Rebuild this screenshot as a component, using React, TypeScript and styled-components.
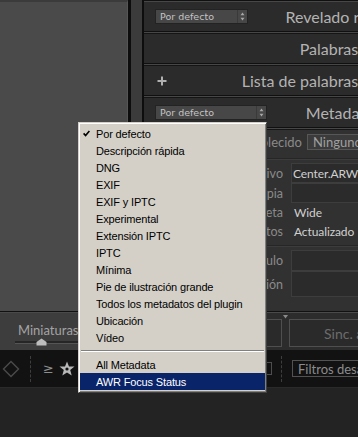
import React from "react";
import styled, { createGlobalStyle } from "styled-components";

const GlobalStyle = createGlobalStyle`
  html, body { margin: 0; padding: 0; background: #232323; overflow: hidden; }
  * { box-sizing: border-box; }
`;

const Screen = styled.div`
  position: relative;
  width: 358px;
  height: 437px;
  overflow: hidden;
  display: flex;
  flex-direction: column;
  background: #232323;
  font-family: Lato, "Open Sans", sans-serif;
`;

const Workspace = styled.div`
  display: flex;
  height: 311px;
  flex: none;
`;

const LeftPanel = styled.div`
  width: 128px;
  flex: none;
  background: #4a4a4a;
  border-top: 2px solid #3b3b3b;
  border-right: 1px solid #565656;
`;

const Gutter = styled.div`
  width: 16px;
  flex: none;
  background: #3b3b3b;
  border-left: 3px solid #0d0d0d;
  border-right: 2px solid #0d0d0d;
`;

const RightPanel = styled.div`
  width: 260px;
  flex: none;
  display: flex;
  flex-direction: column;
  background: #2e2e2e;
`;

const Rule = styled.div<{ $h?: number }>`
  flex: none;
  height: ${(p) => p.$h ?? 3}px;
  background: linear-gradient(#101010 0 1px, #474747 1px 2px, #151515 2px);
`;

const Header = styled.div<{ $pr?: number }>`
  height: 29px;
  flex: none;
  display: flex;
  align-items: center;
  padding: 0 ${(p) => p.$pr ?? 6}px 0 11px;
  background: #2b2b2b;
`;

const HeaderTitle = styled.span`
  margin-left: auto;
  font-size: 16px;
  color: #b3b3b3;
  white-space: nowrap;
`;

const Select = styled.div<{ $w: number }>`
  width: ${(p) => p.$w}px;
  height: 15px;
  display: flex;
  background: #474747;
  border: 1px solid #232323;
  color: #c4c4c4;
  font: 9.5px "DejaVu Sans", sans-serif;
`;

const SelectLabel = styled.span`
  flex: 1;
  display: flex;
  align-items: center;
  padding-left: 4px;
`;

const Spinner = styled.span`
  width: 10px;
  display: flex;
  align-items: center;
  justify-content: center;
  border-left: 1px solid #3a3a3a;
`;

const MetaBody = styled.div`
  flex: 1;
  display: flex;
  flex-direction: column;
  background: #313131;
`;

const PresetRow = styled.div`
  height: 24px;
  display: flex;
  align-items: center;
  gap: 5px;
  font-size: 13px;
`;

const PresetLabel = styled.span`
  width: 158px;
  flex: none;
  text-align: right;
  color: #8a8a8a;
  white-space: nowrap;
`;

const PresetSelect = styled.div`
  width: 100px;
  height: 16px;
  flex: none;
  display: flex;
  align-items: center;
  padding-left: 5px;
  background: #3b3b3b;
  border: 1px solid #575757;
  color: #a0a0a0;
  white-space: nowrap;
`;

const ThinRule = styled.div`
  height: 2px;
  flex: none;
  margin: 4px 0 3px;
  background: linear-gradient(#262626 0 1px, #3c3c3c 1px);
`;

const FieldGrid = styled.div`
  display: grid;
  grid-template-columns: 139px 1fr;
  column-gap: 8px;
  font-size: 12px;
`;

const FieldLabel = styled.span<{ $h: number }>`
  height: ${(p) => p.$h}px;
  display: flex;
  align-items: center;
  justify-content: flex-end;
  color: #8a8a8a;
  font-size: 12.5px;
  white-space: nowrap;
`;

const FieldValue = styled.span<{ $h: number; $boxed?: boolean }>`
  height: ${(p) => p.$h}px;
  display: flex;
  align-items: ${(p) => (p.$boxed ? "flex-start" : "center")};
  padding: ${(p) => (p.$boxed ? "2px 0 0 1px" : "0 0 0 2px")};
  color: #d0d0d0;
  white-space: nowrap;
  letter-spacing: -0.1px;
  background: ${(p) => (p.$boxed ? "#2b2b2b" : "transparent")};
  border: 1px solid ${(p) => (p.$boxed ? "#3d3d3d" : "transparent")};
`;

const BottomBand = styled.div`
  height: 39px;
  flex: none;
  display: flex;
  border-top: 1px solid #111;
`;

const ThumbBand = styled.div`
  width: 128px;
  flex: none;
  display: flex;
  flex-direction: column;
  align-items: flex-start;
  padding: 9px 0 0 15px;
  background: #3d3d3d;
  border-top: 1px solid #4a4a4a;
`;

const ThumbLabel = styled.span`
  margin-left: 3px;
  font-size: 13px;
  color: #a4a4a4;
  line-height: 16px;
`;

const SliderTrack = styled.div`
  margin-top: 3px;
  width: 100px;
  height: 3px;
  display: flex;
  align-items: center;
  background: #262626;
  border-bottom: 1px solid #555;
`;

const SliderThumb = styled.svg`
  margin-left: 21px;
  flex: none;
`;

const SyncBand = styled.div`
  flex: 1;
  display: flex;
  align-items: flex-start;
  padding: 6px 0 0 22px;
  background: #2c2c2c;
  border-top: 1px solid #4a4a4a;
`;

const PanelButton = styled.div<{ $w: number }>`
  width: ${(p) => p.$w}px;
  height: 28px;
  flex: none;
  display: flex;
  align-items: center;
  padding-left: 34px;
  background: #2a2a2a;
  border: 1px solid #4f4f4f;
  color: #6c6c6c;
  font-size: 14px;
  white-space: nowrap;
`;

const Divider = styled.div`
  width: 7px;
  flex: none;
  display: flex;
  justify-content: center;
  margin-top: -4px;
`;

const Toolbar = styled.div`
  height: 38px;
  flex: none;
  display: flex;
  align-items: center;
  background: #121212;
  border-bottom: 1px solid #2a2a2a;
`;

const ToolGroup = styled.div<{ $w?: number; $pad?: number }>`
  ${(p) => (p.$w ? `width: ${p.$w}px; flex: none;` : "flex: 1;")}
  height: 100%;
  display: flex;
  align-items: center;
  padding-left: ${(p) => p.$pad ?? 0}px;
`;

const DashedLine = styled.div<{ $ml: number }>`
  margin-left: ${(p) => p.$ml}px;
  width: 1px;
  height: 26px;
  flex: none;
  border-left: 1px dashed #3e3e3e;
`;

const Glyph = styled.span<{ $ml: number }>`
  margin-left: ${(p) => p.$ml}px;
  color: #8e8e8e;
  font: 13px "DejaVu Sans", sans-serif;
`;

const IconSlot = styled.svg<{ $ml: number }>`
  margin-left: ${(p) => p.$ml}px;
  flex: none;
`;

const TinyBox = styled.div<{ $ml: number }>`
  margin-left: ${(p) => p.$ml}px;
  width: 6px;
  height: 13px;
  flex: none;
  border: 1px solid #4e4e4e;
`;

const FilterBox = styled.div<{ $ml: number }>`
  margin-left: ${(p) => p.$ml}px;
  width: 140px;
  height: 17px;
  flex: none;
  display: flex;
  align-items: center;
  padding-left: 5px;
  border: 1px solid #525252;
  color: #8c8c8c;
  font-size: 13px;
  white-space: nowrap;
`;

const Footer = styled.div`
  flex: 1;
  background: #232323;
`;

/* ---------- context menu ---------- */

const Menu = styled.div`
  position: absolute;
  left: 78px;
  top: 122px;
  width: 189px;
  padding: 2px 1px;
  background: #d4d0c8;
  border: 1px solid;
  border-color: #d4d0c8 #404040 #404040 #d4d0c8;
  box-shadow: inset 1px 1px 0 #ffffff, inset -1px -1px 0 #808080;
  font-family: "Liberation Sans", Arial, sans-serif;
  font-size: 11px;
  letter-spacing: -0.15px;
`;

const MenuItem = styled.div<{ $active?: boolean }>`
  height: 17px;
  display: flex;
  align-items: center;
  color: ${(p) => (p.$active ? "#ffffff" : "#000000")};
  background: ${(p) => (p.$active ? "#0a246a" : "transparent")};
  white-space: nowrap;
`;

const CheckCell = styled.span`
  width: 16px;
  flex: none;
  display: flex;
  align-items: center;
  padding-left: 3px;
`;

const MenuSeparator = styled.div`
  height: 10px;
  margin: 0 1px;
  display: flex;
  flex-direction: column;
  justify-content: center;
  &::before {
    content: "";
    height: 1px;
    background: #808080;
  }
  &::after {
    content: "";
    height: 1px;
    background: #ffffff;
  }
`;

const SpinnerIcon = () => (
  <svg width="5" height="9" viewBox="0 0 5 9">
    <path d="M2.5 0.5 L4.5 3.2 L0.5 3.2 Z" fill="#a8a8a8" />
    <path d="M2.5 8.5 L4.5 5.8 L0.5 5.8 Z" fill="#a8a8a8" />
  </svg>
);

const PresetMenuItems = [
  "Por defecto",
  "Descripción rápida",
  "DNG",
  "EXIF",
  "EXIF y IPTC",
  "Experimental",
  "Extensión IPTC",
  "IPTC",
  "Mínima",
  "Pie de ilustración grande",
  "Todos los metadatos del plugin",
  "Ubicación",
  "Vídeo",
];

export default function App() {
  return (
    <>
      <GlobalStyle />
      <Screen>
        <Workspace>
          <LeftPanel />
          <Gutter />
          <RightPanel>
            <Rule $h={2} />
            <Header>
              <Select $w={93}>
                <SelectLabel>Por defecto</SelectLabel>
                <Spinner>
                  <SpinnerIcon />
                </Spinner>
              </Select>
              <HeaderTitle>Revelado rápido</HeaderTitle>
            </Header>
            <Rule />
            <Header>
              <HeaderTitle>Palabras clave</HeaderTitle>
            </Header>
            <Rule />
            <Header>
              <svg width="10" height="10" viewBox="0 0 10 10" style={{ marginLeft: 2 }}>
                <path d="M5 0.5 V9.5 M0.5 5 H9.5" stroke="#b0b0b0" strokeWidth="2" />
              </svg>
              <HeaderTitle>Lista de palabras clave</HeaderTitle>
            </Header>
            <Rule />
            <Header $pr={23}>
              <Select $w={112}>
                <SelectLabel>Por defecto</SelectLabel>
                <Spinner>
                  <SpinnerIcon />
                </Spinner>
              </Select>
              <HeaderTitle>Metadatos</HeaderTitle>
            </Header>
            <Rule />
            <MetaBody>
              <PresetRow>
                <PresetLabel>Preestablecido</PresetLabel>
                <PresetSelect>Ninguno</PresetSelect>
              </PresetRow>
              <ThinRule />
              <FieldGrid>
                <FieldLabel $h={20}>Nombre de archivo</FieldLabel>
                <FieldValue $h={20} $boxed>Center.ARW</FieldValue>
                <FieldLabel $h={20}>Nombre de copia</FieldLabel>
                <FieldValue $h={20} $boxed />
                <FieldLabel $h={19}>Carpeta</FieldLabel>
                <FieldValue $h={19}>Wide</FieldValue>
                <FieldLabel $h={19}>Estado de metadatos</FieldLabel>
                <FieldValue $h={19}>Actualizado</FieldValue>
              </FieldGrid>
              <ThinRule />
              <FieldGrid>
                <FieldLabel $h={21}>Título</FieldLabel>
                <FieldValue $h={21} $boxed />
                <FieldLabel $h={26}>Pie de ilustración</FieldLabel>
                <FieldValue $h={26} $boxed />
              </FieldGrid>
            </MetaBody>
          </RightPanel>
        </Workspace>

        <BottomBand>
          <ThumbBand>
            <ThumbLabel>Miniaturas</ThumbLabel>
            <SliderTrack>
              <SliderThumb width="11" height="8" viewBox="0 0 11 8">
                <path d="M5.5 0.5 L10.5 4 L10.5 7.5 L0.5 7.5 L0.5 4 Z" fill="#bdbdbd" />
              </SliderThumb>
            </SliderTrack>
          </ThumbBand>
          <SyncBand>
            <PanelButton $w={132}>Sincronizar...</PanelButton>
            <Divider>
              <svg width="5" height="4" viewBox="0 0 5 4">
                <path d="M0 0 H5 L2.5 3.5 Z" fill="#8a8a8a" />
              </svg>
            </Divider>
            <PanelButton $w={120}>Sinc. ajustes</PanelButton>
          </SyncBand>
        </BottomBand>

        <Toolbar>
          <ToolGroup $w={128} $pad={2}>
            <IconSlot $ml={0} width="18" height="18" viewBox="0 0 18 18">
              <path d="M9 1.5 L16.5 9 L9 16.5 L1.5 9 Z" fill="none" stroke="#4a4a4a" strokeWidth="1.4" />
            </IconSlot>
            <DashedLine $ml={10} />
            <Glyph $ml={12}>≥</Glyph>
            <IconSlot $ml={5} width="16" height="15" viewBox="0 0 16 15">
              <path
                d="M8 0.5 L10 5.4 L15.5 5.6 L11.2 9 L12.7 14.5 L8 11.4 L3.3 14.5 L4.8 9 L0.5 5.6 L6 5.4 Z"
                fill="#b8b8b8"
              />
              <circle cx="8" cy="8" r="1.6" fill="#111" />
            </IconSlot>
          </ToolGroup>
          <ToolGroup $pad={138}>
            <TinyBox $ml={0} />
            <DashedLine $ml={9} />
            <FilterBox $ml={10}>Filtros desactivados</FilterBox>
          </ToolGroup>
        </Toolbar>

        <Footer />

        <Menu>
          {PresetMenuItems.map((label, i) => (
            <MenuItem key={label}>
              <CheckCell>
                {i === 0 && (
                  <svg width="7" height="7" viewBox="0 0 7 7">
                    <path d="M0.6 3.4 L2.6 5.6 L6.4 1" fill="none" stroke="#000" strokeWidth="1.6" />
                  </svg>
                )}
              </CheckCell>
              {label}
            </MenuItem>
          ))}
          <MenuSeparator />
          <MenuItem>
            <CheckCell />
            All Metadata
          </MenuItem>
          <MenuItem $active>
            <CheckCell />
            AWR Focus Status
          </MenuItem>
        </Menu>
      </Screen>
    </>
  );
}
